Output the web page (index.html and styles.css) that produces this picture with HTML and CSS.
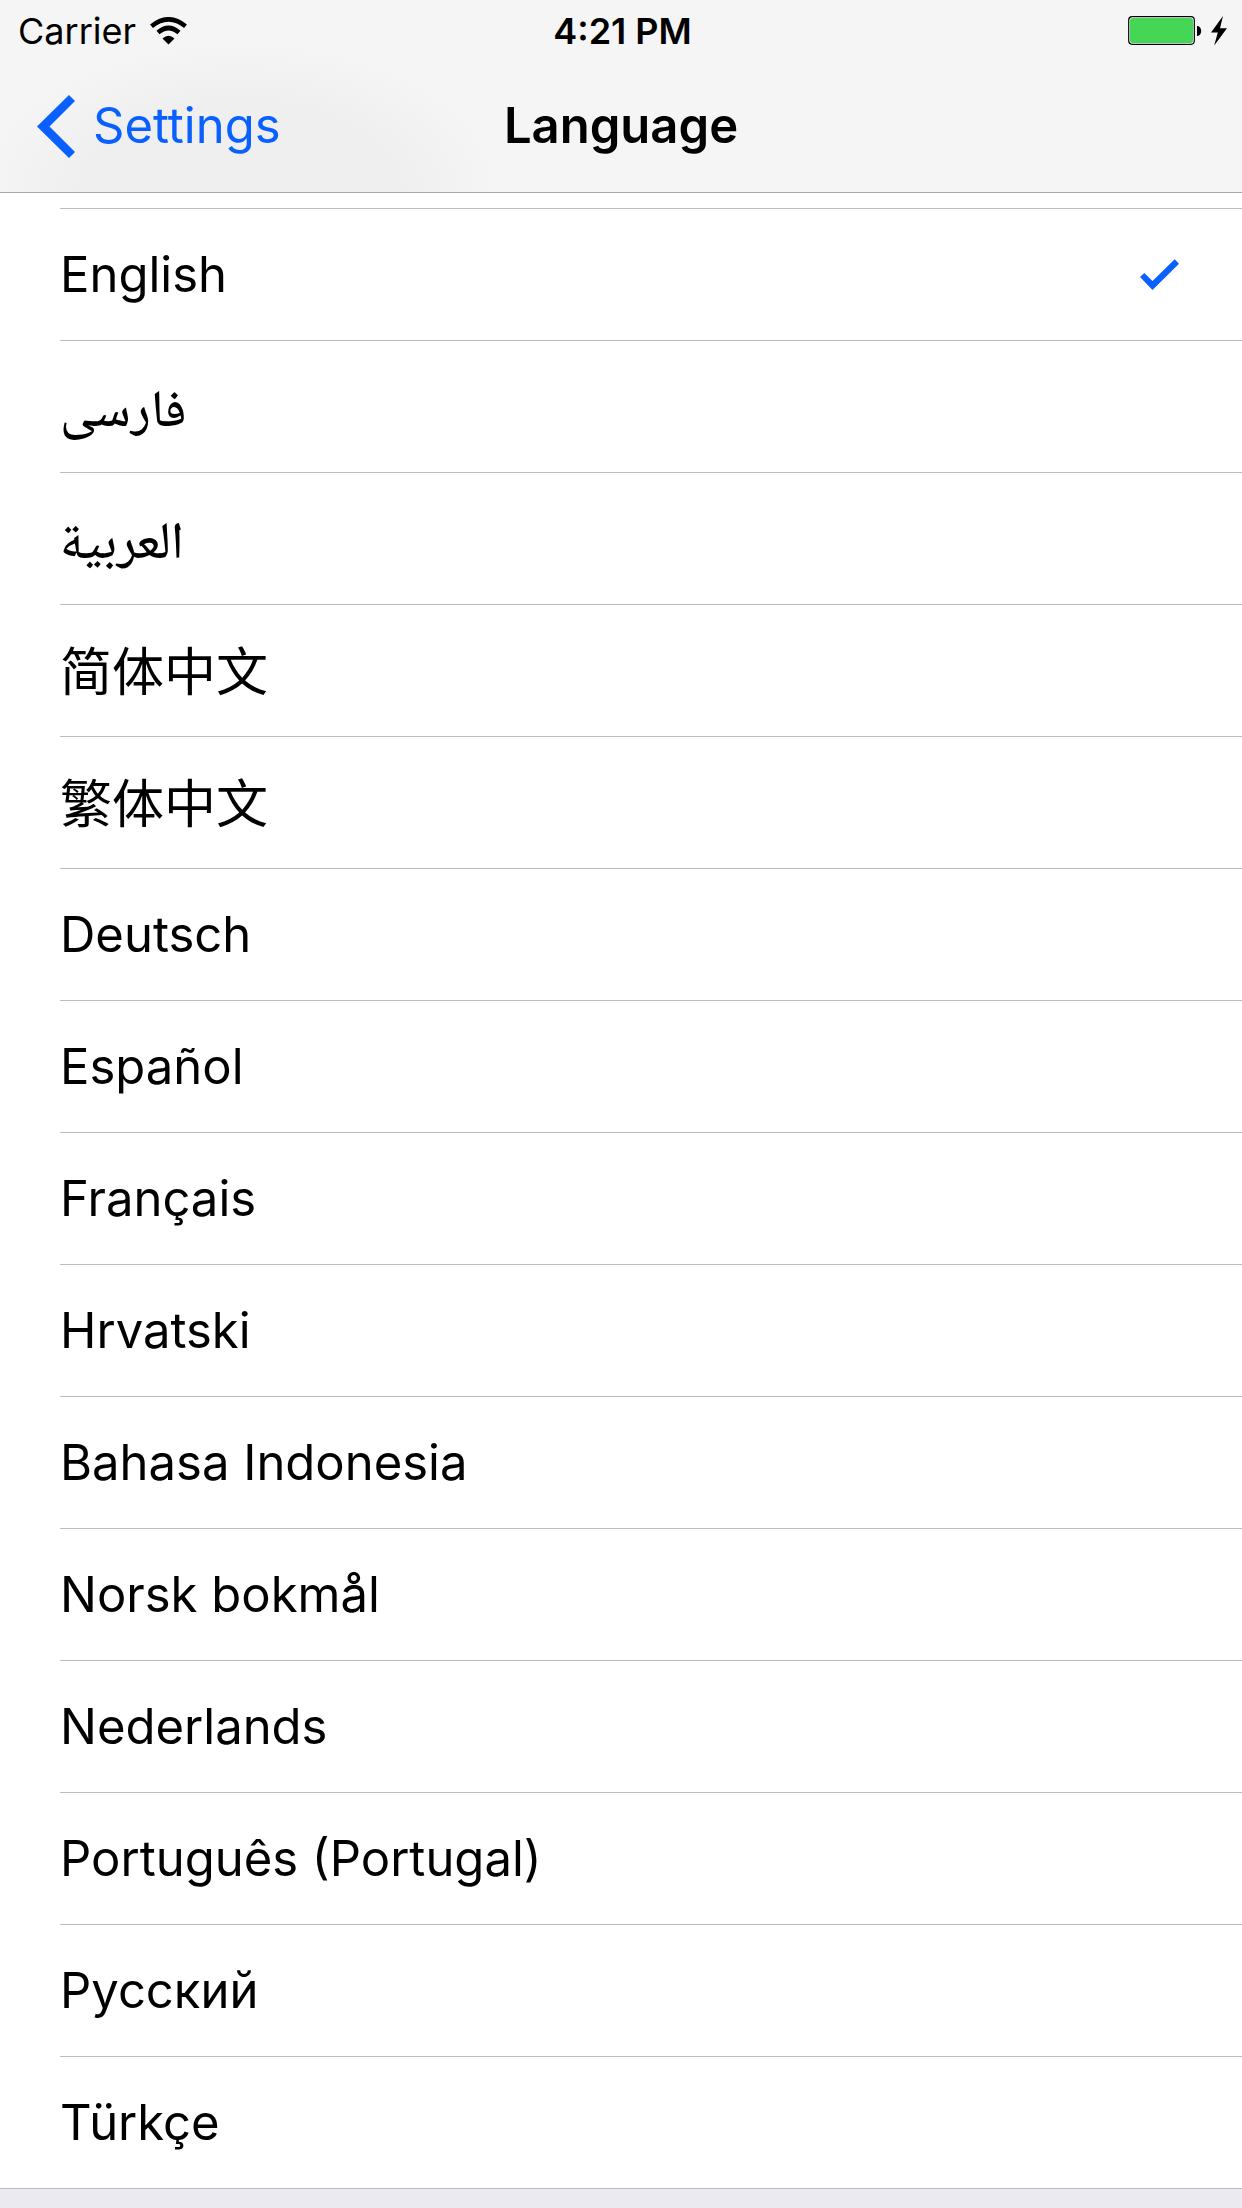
FILE: index.html
```html
<!DOCTYPE html>
<html lang="en">
<head>
<meta charset="utf-8">
<meta name="viewport" content="width=device-width, initial-scale=1">
<title>Language</title>
<link rel="stylesheet" href="styles.css">
</head>
<body>
<header class="header">
  <div class="status">
    <div class="carrier">
      <span>Carrier</span>
      <svg class="wifi" viewBox="0 0 38 28" aria-hidden="true">
        <path d="M18.500 27.500L12.500 21.500Q18.500 16 24.500 21.500Z"/>
        <path d="M8 15.500Q18.500 6.500 29 15.500" fill="none" stroke="#000" stroke-width="4.600"/>
        <path d="M1.500 9.200Q18.500 -4.500 35.500 9.200" fill="none" stroke="#000" stroke-width="4.600"/>
      </svg>
    </div>
    <time class="clock">4:21 PM</time>
    <div class="power">
      <svg class="battery" viewBox="0 0 74 30" aria-hidden="true">
        <rect x=".7" y=".7" width="65.600" height="27.600" rx="3.500" fill="#fff" stroke="#000" stroke-width="1.200"/>
        <rect x="2" y="2" width="63" height="25" rx="2.500" fill="#44d654"/>
        <path d="M69 10c5.500 0 5.500 10 0 10z"/>
      </svg>
      <svg class="bolt" viewBox="0 0 16 30" aria-hidden="true">
        <path d="M12 0L0 16.500H6.800L3.200 29.500L16 12.300H9Z"/>
      </svg>
    </div>
  </div>
  <nav class="navbar">
    <a class="back" href="#settings">
      <svg class="chevron" viewBox="0 0 38 63" aria-hidden="true">
        <path d="M32 0L38 6L12.500 31.500L38 57L32 63L0 31.500Z"/>
      </svg>
      <span>Settings</span>
    </a>
    <h1 class="title">Language</h1>
  </nav>
</header>
<main class="content">
  <form class="languages">
    <label class="row"><span>English</span><input class="choice" type="radio" name="language" value="en" checked></label>
    <label class="row" lang="fa"><span class="arabic">فارسی</span><input class="choice" type="radio" name="language" value="fa"></label>
    <label class="row" lang="ar"><span class="arabic">العربية</span><input class="choice" type="radio" name="language" value="ar"></label>
    <label class="row" lang="zh-Hans"><span class="chinese">简体中文</span><input class="choice" type="radio" name="language" value="zh-Hans"></label>
    <label class="row" lang="zh-Hans"><span class="chinese">繁体中文</span><input class="choice" type="radio" name="language" value="zh-Hant"></label>
    <label class="row" lang="de"><span>Deutsch</span><input class="choice" type="radio" name="language" value="de"></label>
    <label class="row" lang="es"><span>Español</span><input class="choice" type="radio" name="language" value="es"></label>
    <label class="row" lang="fr"><span>Français</span><input class="choice" type="radio" name="language" value="fr"></label>
    <label class="row" lang="hr"><span>Hrvatski</span><input class="choice" type="radio" name="language" value="hr"></label>
    <label class="row" lang="id"><span>Bahasa Indonesia</span><input class="choice" type="radio" name="language" value="id"></label>
    <label class="row" lang="nb"><span>Norsk bokmål</span><input class="choice" type="radio" name="language" value="nb"></label>
    <label class="row" lang="nl"><span>Nederlands</span><input class="choice" type="radio" name="language" value="nl"></label>
    <label class="row" lang="pt"><span>Português (Portugal)</span><input class="choice" type="radio" name="language" value="pt"></label>
    <label class="row" lang="ru"><span>Русский</span><input class="choice" type="radio" name="language" value="ru"></label>
    <label class="row" lang="tr"><span>Türkçe</span><input class="choice" type="radio" name="language" value="tr"></label>
  </form>
</main>
</body>
</html>
```
FILE: styles.css
```css
* {
  box-sizing: border-box;
}

body {
  margin: 0;
  background: #ebeaf0;
  color: #000;
  font-family: Inter, "Liberation Sans", sans-serif;
  font-size: 49px;
  line-height: 60px;
}

svg {
  display: block;
  flex: none;
}

.header {
  background: radial-gradient(ellipse 260px 150px at 240px 192px, #efeff0 60%, #f5f5f5) #f5f5f5;
  border-bottom: 1px solid #a7a7aa;
}

.status {
  display: grid;
  grid-template-columns: 1fr auto 1fr;
  align-items: center;
  height: 60px;
  padding: 2px 15px 0 18px;
  font-size: 36px;
  line-height: 44px;
}

.carrier,
.power {
  display: flex;
  align-items: center;
}

.carrier {
  gap: 14px;
}

.wifi {
  width: 38px;
  height: 28px;
}

.clock {
  font-weight: 600;
}

.power {
  justify-content: flex-end;
  gap: 9px;
}

.battery {
  width: 74px;
  height: 30px;
}

.bolt {
  width: 16px;
  height: 30px;
}

.navbar {
  display: grid;
  grid-template-columns: 1fr auto 1fr;
  align-items: center;
  height: 132px;
  padding: 0 37px;
}

.back {
  display: flex;
  align-items: center;
  gap: 18px;
  color: #0a60ff;
  text-decoration: none;
}

.chevron {
  width: 38px;
  height: 63px;
  fill: currentColor;
}

.title {
  margin: 0;
  font-size: 49px;
  font-weight: 600;
}

.content {
  padding-top: 15px;
  background: #fff;
  border-bottom: 1px solid #bcbbc1;
}

.languages {
  padding-left: 60px;
}

.row {
  display: flex;
  align-items: center;
  justify-content: space-between;
  height: 132px;
  padding-right: 63px;
  border-top: 1px solid #bcbbc1;
}

.arabic {
  padding-top: 16px;
  font-family: "Noto Naskh Arabic", "Noto Sans Arabic", "DejaVu Sans", sans-serif;
  font-size: 52px;
  font-weight: 500;
}

.chinese {
  padding-bottom: 4px;
  font-family: "Noto Sans CJK SC", sans-serif;
  font-size: 52px;
}

.choice {
  appearance: none;
  width: 39px;
  height: 31px;
  margin: 0;
}

.choice:checked {
  background: #0a60ff;
  clip-path: polygon(0 58%, 11% 45%, 32% 71%, 89% 1%, 100% 15%, 32% 100%);
}
```
